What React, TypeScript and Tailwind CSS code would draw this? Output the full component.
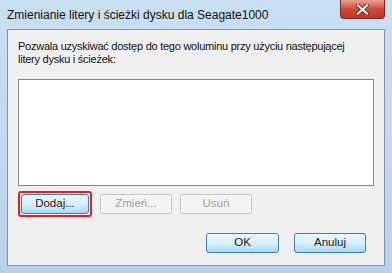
const font = { fontFamily: '"Liberation Sans", Arial, sans-serif' };

const WinButton = ({
  label,
  disabled,
  className = "",
}: {
  label: string;
  disabled?: boolean;
  className?: string;
}) => (
  <div
    className={`h-[20px] flex items-center justify-center rounded-[3px] border text-[11.5px] ${
      disabled
        ? "border-[#c5c5c5] bg-[#f4f4f4] text-[#a0a0a0]"
        : "border-[#3c7fb1] bg-gradient-to-b from-[#eaf6fd] via-[#d9f0fc] to-[#a7d9f5] text-[#1a1a1a]"
    } ${className}`}
  >
    {label}
  </div>
);

export default function App() {
  return (
    <div
      className="w-[392px] h-[273px] overflow-hidden bg-gradient-to-b from-[#c9dff2] to-[#b9d1ea] flex flex-col"
      style={font}
    >
      {/* title bar */}
      <div className="h-[29px] flex items-start justify-between pl-[7px] pr-[7px]">
        <span className="mt-[9px] text-[12px] text-[#111] leading-none whitespace-nowrap">
          Zmienianie litery i ścieżki dysku dla Seagate1000
        </span>
        <div className="w-[45px] h-[19px] rounded-b-[4px] border border-t-0 border-[#7a2a24] bg-gradient-to-b from-[#e8a093] via-[#d1493a] to-[#c2341f] flex items-center justify-center">
          <svg width="13" height="11" viewBox="0 0 13 11">
            <path
              d="M2 1.5 L11 9.5 M11 1.5 L2 9.5"
              stroke="#4a1410"
              strokeWidth="3.6"
              strokeLinecap="square"
            />
            <path
              d="M2 1.5 L11 9.5 M11 1.5 L2 9.5"
              stroke="#fff"
              strokeWidth="2.2"
              strokeLinecap="square"
            />
          </svg>
        </div>
      </div>

      {/* client area */}
      <div className="mx-[7px] h-[237px] border border-[#7f93a9] bg-[#f0f0f0] flex flex-col px-[10px]">
        <p className="mt-[10px] text-[11px] tracking-[-0.25px] leading-[13px] text-[#111] whitespace-nowrap">
          Pozwala uzyskiwać dostęp do tego woluminu przy użyciu następującej
          <br />
          litery dysku i ścieżek:
        </p>
        <div className="mt-[13px] h-[107px] border border-[#828790] bg-white" />
        <div className="mt-[5px] flex items-center gap-[5px]">
          <div className="rounded-[3px] border-[2px] border-[#e02020] p-[1px]">
            <WinButton label="Dodaj..." className="w-[68px]" />
          </div>
          <WinButton label="Zmień..." disabled className="w-[72px] ml-[3px]" />
          <WinButton label="Usuń" disabled className="w-[72px] ml-[3px]" />
        </div>
        <div className="mt-[16px] flex justify-end gap-[15px] pr-[8px]">
          <WinButton label="OK" className="w-[73px]" />
          <WinButton label="Anuluj" className="w-[72px]" />
        </div>
      </div>
    </div>
  );
}
